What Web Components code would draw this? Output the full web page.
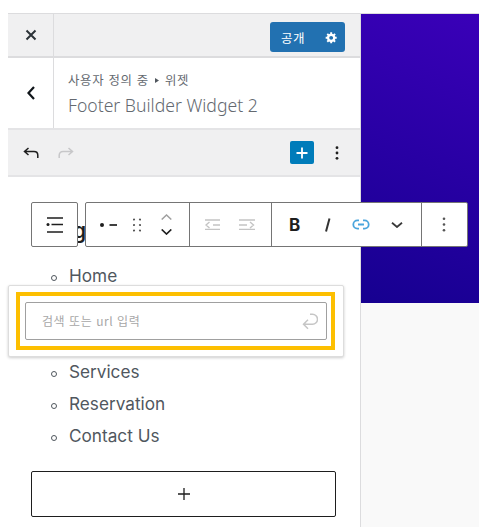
<!DOCTYPE html>
<html lang="ko"><head><meta charset="utf-8"><title>Widget</title>
<style>
html,body{margin:0;padding:0;background:#fff}
body{padding:13px 10px 0 8px;height:514px;overflow:hidden;box-sizing:content-box;font-family:"Noto Sans","Noto Sans CJK KR",sans-serif}
</style></head><body>
<wp-customizer>
  <wp-sidebar>
    <wp-topbar></wp-topbar>
    <wp-title section="사용자 정의 중" sub="위젯" name="Footer Builder Widget 2"></wp-title>
    <wp-actions></wp-actions>
    <wp-canvas>
      <wp-item>Home</wp-item>
      <wp-item></wp-item>
      <wp-item></wp-item>
      <wp-item>Services</wp-item>
      <wp-item>Reservation</wp-item>
      <wp-item>Contact Us</wp-item>
    </wp-canvas>
  </wp-sidebar>
  <wp-preview></wp-preview>
</wp-customizer>
<script>
function def(name,html){
  customElements.define(name,class extends HTMLElement{
    connectedCallback(){
      if(this.shadowRoot)return;
      const r=this.attachShadow({mode:'open'});
      r.innerHTML=typeof html==='function'?html(this):html;
    }
  });
}
const svg=(w,h,vb,body)=>`<svg width="${w}" height="${h}" viewBox="${vb}" fill="none">${body}</svg>`;
def('wp-customizer',`<style>:host{display:flex;width:471px;height:514px;border-top:1px solid #dcdcde;box-sizing:border-box}</style><slot></slot>`);
def('wp-sidebar',`<style>:host{display:flex;flex-direction:column;width:353px;flex:none;border-right:1px solid #dcdcde;box-sizing:border-box;position:relative;background:#fff}</style><slot></slot>`);
def('wp-preview',`<style>:host{display:flex;flex-direction:column;flex:1;background:#f9f9f9}
.g{height:289px;background:linear-gradient(200deg,#3a00b8 0%,#160090 100%)}</style><div class="g"></div>`);
def('wp-item',`<style>:host{display:block;min-height:32px;margin-left:12px;font:17.2px/32px Inter,"Noto Sans",sans-serif;color:#50575e}
:host::before{content:"";display:inline-block;box-sizing:border-box;width:6px;height:6px;border:1px solid #50575e;border-radius:50%;margin:0 12px 0 -18px;vertical-align:1px}</style><slot></slot>`);
def('wp-topbar',`<style>:host{display:flex;height:44px;box-sizing:border-box;background:#f0f0f1;border-bottom:2px solid #dcdcde;align-items:stretch;font-family:"Noto Sans CJK KR",sans-serif}
.x{width:46px;flex:none;border-right:1px solid #dcdcde;display:flex;align-items:center;justify-content:center;box-sizing:border-box;padding-left:1px}
.sp{flex:1}
.btn{margin:8px 15px 0 0;width:75px;height:30px;border-radius:3px;background:#2271b1;color:#fff;display:flex;align-items:center;font-size:12.5px;box-sizing:border-box}
.l{width:46px;text-align:center;letter-spacing:.6px;padding-top:1px;box-sizing:border-box}.r{flex:1;display:flex;align-items:center;justify-content:center;padding-left:1px}
</style>
<div class="x">${svg(12,12,'0 0 12 12','<path d="M1.5 1.5l9 9M10.5 1.5l-9 9" stroke="#2c3338" stroke-width="2"/>')}</div>
<div class="sp"></div>
<div class="btn"><span class="l">공개</span><span class="r">${svg(13,13,'0 0 20 20','<path fill="#fff" d="M18 12h-2.18c-.17.7-.44 1.35-.81 1.93l1.54 1.54-2.1 2.1-1.54-1.54c-.58.36-1.23.63-1.91.79V19H8v-2.18c-.68-.16-1.33-.43-1.91-.79l-1.54 1.54-2.12-2.12 1.54-1.54c-.36-.58-.63-1.23-.79-1.91H1V9.03h2.17c.16-.7.44-1.35.8-1.94L2.43 5.55l2.1-2.1 1.54 1.54c.58-.37 1.24-.64 1.93-.81V2h3v2.18c.68.16 1.33.43 1.91.79l1.54-1.54 2.12 2.12-1.54 1.54c.36.59.64 1.24.8 1.94H18V12zm-8.5 1.5c1.66 0 3-1.34 3-3s-1.34-3-3-3-3 1.34-3 3 1.34 3 3 3z"/>')}</span></div>`);
def('wp-title',e=>`<style>:host{display:flex;height:72px;box-sizing:border-box;background:#fff;border-bottom:2px solid #e4e4e6}
.b{width:46px;flex:none;border-right:1px solid #dcdcde;box-sizing:border-box;display:flex;align-items:center;justify-content:center}
.t{padding:13px 0 0 14px}
.s{font:12.4px/18px "Noto Sans CJK KR",sans-serif;color:#646970;letter-spacing:.7px;display:flex;align-items:center;gap:6px}
.n{font:300 17.6px/26px "Noto Sans","Noto Sans CJK KR",sans-serif;color:#646970;margin-top:3px}
</style><div class="b">${svg(10,16,'0 0 10 16','<path d="M8 2L2.5 8 8 14" stroke="#10151a" stroke-width="2.2"/>')}</div>
<div class="t"><div class="s"><span>${e.getAttribute('section')}</span>${svg(4,5,'0 0 4 5','<path d="M0 0l4 2.500L0 5z" fill="#50575e"/>')}<span>${e.getAttribute('sub')}</span></div><div class="n">${e.getAttribute('name')}</div></div>`);
def('wp-actions',`<style>:host{display:flex;height:47px;box-sizing:border-box;background:#f0f0f1;border-bottom:2px solid #e4e4e6;align-items:center;padding:0 21px 0 15px}
.ic{display:flex}.sp{flex:1}
.plus{width:24px;height:23px;background:#007cba;border-radius:2px;display:flex;align-items:center;justify-content:center;margin-right:21px}
.g{margin-left:19px}
</style>
<span class="ic">${svg(16,12,'0 0 16 12','<path d="M5.500 1L1.500 4.500 5.500 8M1.500 4.500H11c2.300 0 3.800 1.500 3.800 3.700V11" stroke="#1e1e1e" stroke-width="1.500"/>')}</span>
<span class="ic g">${svg(16,12,'0 0 16 12','<path d="M10.500 1l4 3.500L10.500 8M14.500 4.500H5C2.700 4.500 1.200 6 1.200 8.200V11" stroke="#c7c7c9" stroke-width="1.500"/>')}</span>
<span class="sp"></span>
<span class="plus">${svg(14,14,'0 0 14 14','<path d="M7 1.500v11M1.500 7h11" stroke="#fff" stroke-width="1.800"/>')}</span>
<span class="ic">${svg(4,14,'0 0 4 14','<circle cx="2" cy="1.700" r="1.400" fill="#1e1e1e"/><circle cx="2" cy="7" r="1.400" fill="#1e1e1e"/><circle cx="2" cy="12.300" r="1.400" fill="#1e1e1e"/>')}</span>`);
def('wp-canvas',`<style>:host{display:block;flex:1;position:relative;padding:41px 0 0 31px;margin-left:-8px;font-family:Inter,"Noto Sans",sans-serif;color:#50575e}
.h{font:600 21px/26px Inter,sans-serif;color:#1e1e1e;padding-left:42px;height:26px}
ul{list-style:none;margin:16px 0 0;padding:0 0 0 26px}
.add{margin-top:19px;width:305px;height:46px;box-sizing:border-box;border:1px solid #1e1e1e;border-radius:2px;display:flex;align-items:center;justify-content:center;background:#fff}
.bar{position:absolute;top:25px;height:45px;box-sizing:border-box;border:1px solid #757575;border-radius:2px;background:#fff;display:flex;align-items:stretch;z-index:3}
.block{left:31px;width:47px;align-items:center;justify-content:center}
.main{left:85px;width:383px}
.grp{display:flex;align-items:center;box-sizing:border-box;border-right:1px solid #757575;flex:none}
.grp:last-child{border-right:0}
.pop{position:absolute;left:8px;top:108px;width:336px;height:72px;box-sizing:border-box;background:#fff;border:1px solid #ddd;border-radius:2px;box-shadow:0 1px 3px rgba(0,0,0,.2);z-index:4;padding:6px 8px 0 7px}
.hl{height:58px;box-sizing:border-box;border:4px solid #fdbf00;padding:6px 4px 0 5px;width:319px}
.in{height:38px;box-sizing:border-box;border:1px solid #a0a0a0;border-radius:2px;display:flex;align-items:center;justify-content:space-between;padding:0 8px 0 16px;font:12px/16px "Noto Sans CJK KR",sans-serif;color:#a7a7a7;letter-spacing:.55px}
</style>
<div class="h">g</div>
<ul><slot></slot></ul>
<div class="add">${svg(12,12,'0 0 12 12','<path d="M6 0v12M0 6h12" stroke="#1e1e1e" stroke-width="1.300"/>')}</div>
<div class="bar block">${svg(20,20,'0 0 20 20','<path d="M2 3h16M6.500 9.500H18M2 17h16" stroke="#1e1e1e" stroke-width="1.700"/><circle cx="3" cy="9.500" r="1.500" fill="#1e1e1e"/>')}</div>
<div class="bar main">
  <div class="grp" style="width:104px;padding-left:14px">
    ${svg(17,6,'0 0 17 6','<circle cx="2" cy="3" r="2" fill="#1e1e1e"/><path d="M9.500 3H17" stroke="#1e1e1e" stroke-width="1.700"/>')}
    <span style="display:flex;margin-left:16px">${svg(8,14,'0 0 8 14','<g fill="#555"><circle cx="1" cy="1.500" r="1.100"/><circle cx="7" cy="1.500" r="1.100"/><circle cx="1" cy="7" r="1.100"/><circle cx="7" cy="7" r="1.100"/><circle cx="1" cy="12.500" r="1.100"/><circle cx="7" cy="12.500" r="1.100"/></g>')}</span>
    <span style="display:flex;flex-direction:column;gap:9px;margin-left:20px">${svg(11,6,'0 0 11 6','<path d="M.7 5.500L5.500 1l4.800 4.500" stroke="#a0a0a0" stroke-width="1.500"/>')}${svg(11,6,'0 0 11 6','<path d="M.7.5L5.500 5l4.800-4.500" stroke="#1e1e1e" stroke-width="1.700"/>')}</span>
  </div>
  <div class="grp" style="width:82px;padding-left:15px;gap:19px">
    ${svg(15,11,'0 0 15 11','<path d="M0 1h15M8 6h7M0 10.500h15M4.500 3L1 6l3.500 3" stroke="#c4c4c4" stroke-width="1.400"/>')}
    ${svg(16,11,'0 0 16 11','<path d="M0 1h16M0 6h8M0 10.500h16M11 3l3.500 3L11 9" stroke="#c4c4c4" stroke-width="1.400"/>')}
  </div>
  <div class="grp" style="width:150px;padding-left:17px">
    <b style="font:700 17px/20px Inter,sans-serif;color:#1e1e1e;width:11px">B</b>
    <span style="margin-left:24px;display:flex">${svg(7,14,'0 0 7 14','<path d="M5.500.5L2 13.500" stroke="#333" stroke-width="2"/>')}</span>
    <span style="margin-left:21px;display:flex">${svg(18,11,'0 0 18 11','<path d="M7 1.300H5.500a4.200 4.200 0 000 8.400H7M11 1.300h1.500a4.200 4.200 0 010 8.400H11M6 5.500h6" stroke="#4aa5dd" stroke-width="1.800"/>')}</span>
    <span style="margin-left:21px;display:flex">${svg(12,6,'0 0 12 6','<path d="M1 .8L6 5l5-4.200" stroke="#3a3a3a" stroke-width="1.800"/>')}</span>
  </div>
  <div class="grp" style="flex:1;justify-content:center;padding-right:2px">${svg(4,15,'0 0 4 15','<circle cx="2" cy="1.800" r="1.300" fill="#555"/><circle cx="2" cy="7.500" r="1.300" fill="#555"/><circle cx="2" cy="13.200" r="1.300" fill="#555"/>')}</div>
</div>
<div class="pop"><div class="hl"><div class="in"><span>검색 또는 url 입력</span>${svg(16,17,'0 0 16 17','<path d="M8 1.200h2.500a5 5 0 010 10H1.500M6 6.700l-4.500 4.500L6 15.700" stroke="#c6c6c6" stroke-width="1.500"/>')}</div></div></div>
`);
</script>
</body></html>
